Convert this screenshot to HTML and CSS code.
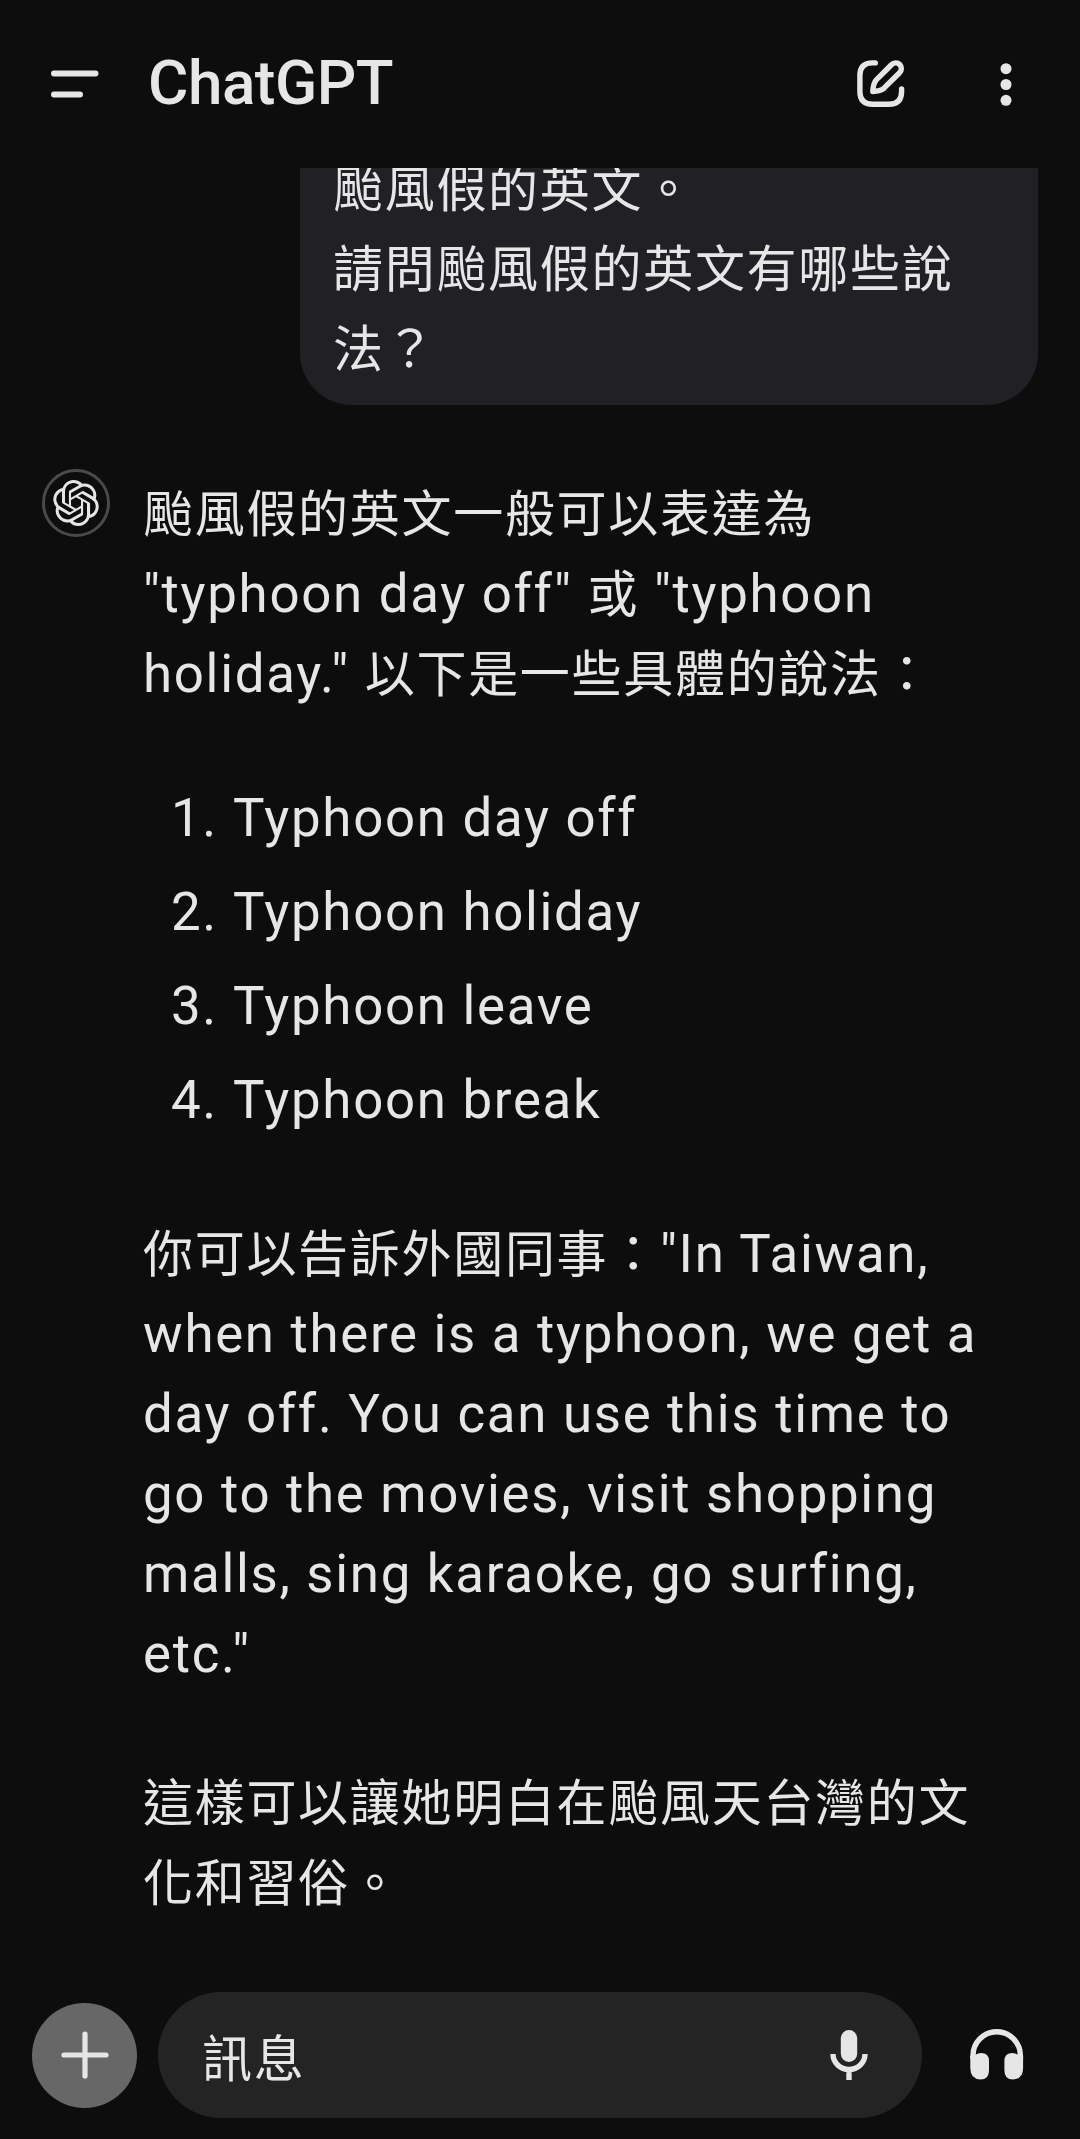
FILE: index.html
```html
<!DOCTYPE html>
<html lang="zh-Hant">
<head>
<meta charset="utf-8">
<title>ChatGPT</title>
<link rel="stylesheet" href="styles.css">
</head>
<body>
<div class="app">
  <header class="topbar">
    <svg class="menu-icon" width="48" height="30" viewBox="0 0 48 30"><path d="M3 4.500H44.500M3 25.500H29" stroke="currentColor" stroke-width="6" stroke-linecap="round"/></svg>
    <h1 class="title">ChatGPT</h1>
    <svg class="compose-icon" width="48" height="48" viewBox="0 0 48 48" fill="none" stroke="currentColor" stroke-width="5.400" stroke-linecap="round" stroke-linejoin="round"><path d="M18.300 2.900H15.500C7 2.900 2.900 7 2.900 15.500V31.500C2.900 40 7 44.200 15.500 44.200H32C40.500 44.200 44.600 40 44.600 31.500V29"/><path d="M34.200 5C37 2.200 40.500 2.300 42.700 4.500C45 6.800 45.100 10.200 42.300 13L27 28.200C24 31 20 31.300 15.800 31.500C16 27.300 16.500 23 19.300 19.900Z"/></svg>
    <svg class="more-icon" width="12" height="44" viewBox="0 0 12 44" fill="currentColor"><circle cx="6" cy="6.700" r="5.500"/><circle cx="6" cy="22.500" r="5.500"/><circle cx="6" cy="38.300" r="5.500"/></svg>
  </header>
  <main class="chat">
    <div class="bubble"><span class="han">颱風假的英文。<br>請問颱風假的英文有哪些說<br>法？</span></div>
    <div class="answer">
      <div class="avatar">
        <svg width="46" height="46" viewBox="0 0 24 24" fill="currentColor"><path d="M22.2819 9.8211a5.9847 5.9847 0 0 0-.5157-4.9108 6.0462 6.0462 0 0 0-6.5098-2.9A6.0651 6.0651 0 0 0 4.9807 4.1818a5.9847 5.9847 0 0 0-3.9977 2.9 6.0462 6.0462 0 0 0 .7427 7.0966 5.98 5.98 0 0 0 .511 4.9107 6.051 6.051 0 0 0 6.5146 2.9001A5.9847 5.9847 0 0 0 13.2599 24a6.0557 6.0557 0 0 0 5.7718-4.2058 5.9894 5.9894 0 0 0 3.9977-2.9001 6.0557 6.0557 0 0 0-.7475-7.0729zm-9.022 12.6081a4.4755 4.4755 0 0 1-2.8764-1.0408l.1419-.0804 4.7783-2.7582a.7948.7948 0 0 0 .3927-.6813v-6.7369l2.02 1.1686a.071.071 0 0 1 .038.052v5.5826a4.504 4.504 0 0 1-4.4945 4.4944zm-9.6607-4.1254a4.4708 4.4708 0 0 1-.5346-3.0137l.142.0852 4.783 2.7582a.7712.7712 0 0 0 .7806 0l5.8428-3.3685v2.3324a.0804.0804 0 0 1-.0332.0615L9.74 19.9502a4.4992 4.4992 0 0 1-6.1408-1.6464zM2.3408 7.8956a4.485 4.485 0 0 1 2.3655-1.9728V11.6a.7664.7664 0 0 0 .3879.6765l5.8144 3.3543-2.0201 1.1685a.0757.0757 0 0 1-.071 0l-4.8303-2.7865A4.504 4.504 0 0 1 2.3408 7.872zm16.5963 3.8558L13.1038 8.364 15.1192 7.2a.0757.0757 0 0 1 .071 0l4.8303 2.7913a4.4944 4.4944 0 0 1-.6765 8.1042v-5.6772a.79.79 0 0 0-.407-.667zm2.0107-3.0231l-.142-.0852-4.7735-2.7818a.7759.7759 0 0 0-.7854 0L9.409 9.2297V6.8974a.0662.0662 0 0 1 .0284-.0615l4.8303-2.7866a4.4992 4.4992 0 0 1 6.6802 4.66zM8.3065 12.863l-2.02-1.1638a.0804.0804 0 0 1-.038-.0567V6.0742a4.4992 4.4992 0 0 1 7.3757-3.4537l-.142.0805L8.704 5.459a.7948.7948 0 0 0-.3927.6813zm1.0976-2.3654l2.602-1.4998 2.6069 1.4998v2.9994l-2.5974 1.4997-2.6067-1.4997Z"/></svg>
      </div>
      <div class="text">
        <p><span class="han">颱風假的英文一般可以表達為</span><br>"typhoon day off" <span class="han">或</span> "typhoon<br>holiday." <span class="han">以下是一些具體的說法：</span></p>
        <ol>
          <li><span class="num">1.</span>Typhoon day off</li>
          <li><span class="num">2.</span>Typhoon holiday</li>
          <li><span class="num">3.</span>Typhoon leave</li>
          <li><span class="num">4.</span>Typhoon break</li>
        </ol>
        <p><span class="han">你可以告訴外國同事：</span>"In Taiwan,<br>when there is a typhoon, we get a<br>day off. You can use this time to<br>go to the movies, visit shopping<br>malls, sing karaoke, go surfing,<br>etc."</p>
        <p><span class="han">這樣可以讓她明白在颱風天台灣的文<br>化和習俗。</span></p>
      </div>
    </div>
  </main>
  <footer class="composer">
    <div class="plus"><svg width="48" height="48" viewBox="0 0 48 48"><path d="M24 3V45M3 24H45" stroke="currentColor" stroke-width="5.200" stroke-linecap="round"/></svg></div>
    <div class="field">
      <span class="han">訊息</span>
      <svg width="38" height="50" viewBox="0 0 38 50"><rect x="10.800" y="0" width="16.400" height="32" rx="8.200" fill="currentColor"/><path d="M3 24A16 15.500 0 0 0 35 24M19 40V50" fill="none" stroke="currentColor" stroke-width="5.400"/></svg>
    </div>
    <svg class="headphones" width="54" height="52" viewBox="0 0 54 52"><path d="M3 30V26.500A23.700 23.700 0 0 1 50.400 26.500V30" fill="none" stroke="currentColor" stroke-width="5.400"/><path d="M.3 27L6 25.500Q8 24 11 24Q19 24 19 32V41.500Q19 50.500 10.500 50.500Q.3 50 .3 39ZM53.100 27L47.400 25.500Q45.400 24 42.400 24Q34.400 24 34.400 32V41.500Q34.400 50.500 42.900 50.500Q53.100 50 53.100 39Z" fill="currentColor"/></svg>
  </footer>
</div>
</body>
</html>
```
FILE: styles.css
```css
* { box-sizing: border-box; }
body {
  margin: 0;
  background: #0d0d0d;
  color: #e6e6e6;
  font: 400 52.8px/80px Roboto, "Noto Sans CJK TC", sans-serif;
  letter-spacing: 1.7px;
}
svg { display: block; flex: none; }
p, h1, ol { margin: 0; padding: 0; }
.app {
  width: 1080px;
  height: 2139px;
  display: flex;
  flex-direction: column;
  overflow: hidden;
}
.topbar {
  flex: none;
  height: 168px;
  display: flex;
  align-items: center;
  padding-left: 51px;
  padding-right: 68px;
}
.title {
  flex: 1;
  margin-left: 49px;
  padding-bottom: 2px;
  font-size: 62px;
  font-weight: 500;
  letter-spacing: -.5px;
}
.compose-icon { margin-right: 95px; }
.chat {
  flex: 1;
  min-height: 0;
  overflow: hidden;
}
.bubble {
  width: 738px;
  height: 237px;
  margin-left: 300px;
  padding-left: 33px;
  background: #212024;
  border-radius: 0 0 52px 52px;
  display: flex;
  align-items: flex-end;
  padding-bottom: 20px;
}
.han {
  font-family: "Noto Sans CJK TC", sans-serif;
  font-size: 50px;
  line-height: 1;
}
.bubble .han { line-height: 80px; }
.answer { display: flex; padding: 64px 0 0 42px; }
.avatar {
  flex: none;
  width: 68px;
  height: 68px;
  border: 3px solid #4a4a4a;
  border-radius: 50%;
  display: flex;
  align-items: center;
  justify-content: center;
}
.text {
  margin-left: 33px;
  padding-top: 5px;
  display: flex;
  flex-direction: column;
  gap: 69px;
  white-space: nowrap;
}
ol {
  list-style: none;
  display: flex;
  flex-direction: column;
  gap: 14px;
  margin: -5px 0 5px;
  padding-left: 28px;
}
li { display: flex; }
.num { width: 62px; }
.composer {
  flex: none;
  height: 147px;
  display: flex;
  align-items: center;
  padding: 0 56px 21px 32px;
}
.plus {
  width: 105px;
  height: 105px;
  border-radius: 50%;
  background: #676767;
  display: flex;
  align-items: center;
  justify-content: center;
}
.field {
  width: 764px;
  height: 126px;
  margin-left: 21px;
  padding: 0 54px 0 44px;
  border-radius: 63px;
  background: #242424;
  display: flex;
  align-items: center;
  justify-content: space-between;
}
.headphones { margin-left: auto; }
```
